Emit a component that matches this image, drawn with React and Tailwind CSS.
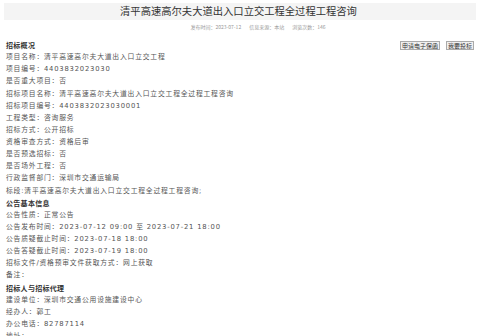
import React from "react";

const rows = [
  { bold: true, text: "招标概况" },
  { text: "项目名称：清平高速高尔夫大道出入口立交工程" },
  { text: "项目编号：4403832023030" },
  { text: "是否重大项目：否" },
  { text: "招标项目名称：清平高速高尔夫大道出入口立交工程全过程工程咨询" },
  { text: "招标项目编号：4403832023030001" },
  { text: "工程类型：咨询服务" },
  { text: "招标方式：公开招标" },
  { text: "资格审查方式：资格后审" },
  { text: "是否预选招标：否" },
  { text: "是否场外工程：否" },
  { text: "行政监督部门：深圳市交通运输局" },
  { text: "标段:清平高速高尔夫大道出入口立交工程全过程工程咨询;" },
  { bold: true, text: "公告基本信息" },
  { text: "公告性质：正常公告" },
  { text: "公告发布时间：2023-07-12 09:00 至 2023-07-21 18:00" },
  { text: "公告质疑截止时间：2023-07-18 18:00" },
  { text: "公告答疑截止时间：2023-07-19 18:00" },
  { text: "招标文件/资格预审文件获取方式：网上获取" },
  { text: "备注：" },
  { bold: true, text: "招标人与招标代理" },
  { text: "建设单位：深圳市交通公用设施建设中心" },
  { text: "经办人：郭工" },
  { text: "办公电话：82787114" },
  { text: "地址：" },
];

const App = () => {
  return (
    <div
      className="w-[480px] h-[336px] overflow-hidden bg-white"
      style={{ fontFamily: '"Noto Sans CJK SC", "Noto Sans", sans-serif' }}
    >
      {/* Title band */}
      <div className="mx-1 mt-[3px] h-[17px] bg-[#f4f4f4] flex items-center justify-center">
        <h1 className="text-[10.3px] leading-none text-[#333] pr-[3px]">
          清平高速高尔夫大道出入口立交工程全过程工程咨询
        </h1>
      </div>

      {/* Meta */}
      <div className="flex justify-center gap-[8px] mt-[3px] text-[5px] leading-[8px] text-[#999] pl-[36px]">
        <span>发布时间：2023-07-12</span>
        <span>信息来源：本站</span>
        <span>浏览次数：146</span>
      </div>

      {/* Body */}
      <div className="relative px-[6px] mt-[8px]">
        <div className="absolute right-[6px] top-[2px] flex gap-[6px]">
          <button className="border border-[#aaa] bg-[#f0f0f0] text-[6px] leading-[7px] px-[1px] text-[#333]">
            申请电子保函
          </button>
          <button className="border border-[#aaa] bg-[#f0f0f0] text-[6px] leading-[7px] px-[1px] text-[#333]">
            我要投标
          </button>
        </div>
        {rows.map((row, i) =>
          row.bold ? (
            <p key={i} className="text-[7px] leading-[12.13px] font-bold text-[#333] tracking-[0.3px]">
              {row.text}
            </p>
          ) : (
            <p
              key={i}
              className="text-[6.8px] leading-[12.13px] text-[#555] tracking-[0.8px] font-['DejaVu_Sans','Noto_Sans_CJK_SC',sans-serif]"
            >
              {row.text}
            </p>
          )
        )}
      </div>
    </div>
  );
};

export default App;
